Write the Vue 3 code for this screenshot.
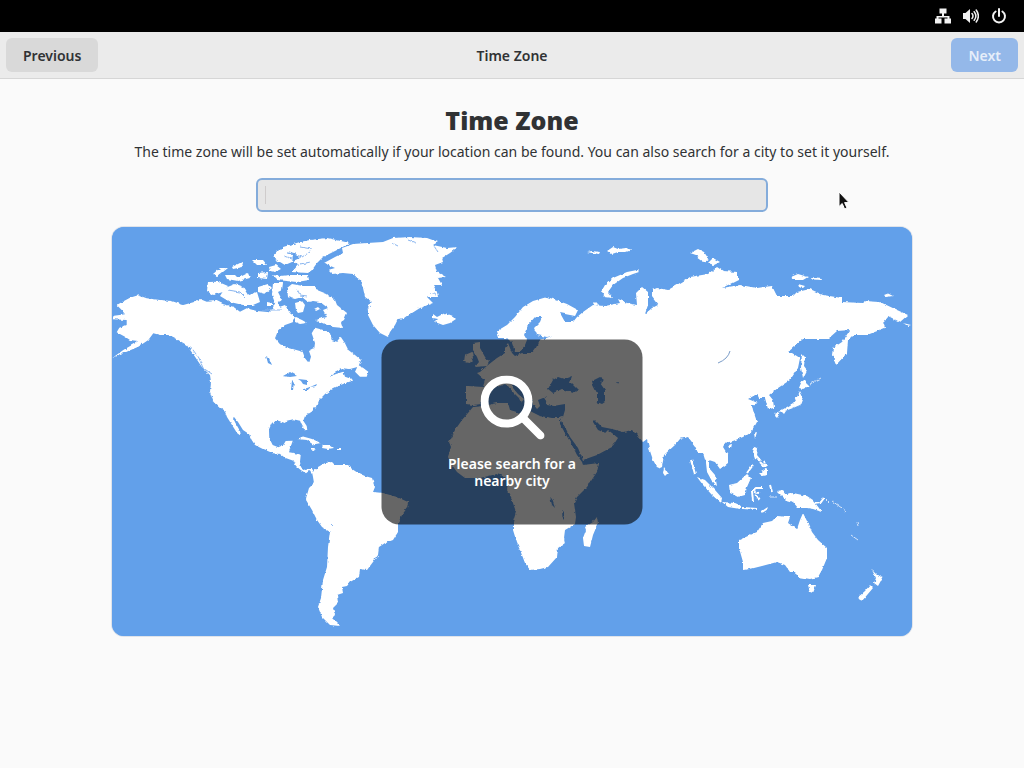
<script setup>
import { ref } from 'vue'

const city = ref('')

const land = [
  // North America
  '116.7,305 123,301.5 130,297.7 138,295.3 146.7,298.3 160,300 171.7,301 183.3,305 193.3,302.3 200,299 206.7,301.7 216.7,301 223.3,304.3 233.3,306.7 240,311.7 246.7,308.3 256.7,311 270,312.3 273.3,306.7 276.7,300 280,306.7 285,305 290,313.3 295,316.7 292.7,322.3 285,325 278.3,330 275,338.3 280,344.3 290,348.3 302.7,351.7 305,358.3 309,363.3 311,356.7 309,351 314.3,348.3 315,343 311.7,333.3 315,327.7 323.3,330 330,333.3 331.7,340 336.7,341.7 340.7,336.7 345,343.3 348.3,350 355,355 361,360 358.3,366.7 350,369 341.7,368.3 335,371.7 329.3,377 336,374 343.3,371.7 345,376.7 351.7,379 353.3,380.5 345,383.3 338,386 330,390 325,394 318.3,400.7 316,406.7 311.7,411.7 305,416 303.3,420.7 306.7,426 307.3,430 305,430.7 301.7,425 300,420.7 293.3,419.3 286.7,420.7 285,423 278.3,420.7 271.7,423.3 269,429.3 269.3,438.3 272.7,445 278.3,447.3 283.3,445 285.7,441 292.7,440.7 290.7,446.7 289,452.3 295,453.3 300.7,455 300,461.7 301,467.3 305,470 311.7,468.7 315,471.7 312.7,473.3 309,471 306,473.3 300.7,470 296,466 293.3,460.7 285,457.7 280,454 273.3,453.3 263.3,449.3 255,445 251.7,440 249,434 243,430 238,422 234,417 233,418 236,424 240,431 241,436 237,433 232,425 227,417 225,411.7 220,408.3 213.3,401.7 210,391.7 211,381.7 210,375 201.7,366.7 195,356.7 186.7,345 178.3,340 168.3,335 160,335 153.3,333.3 148.3,340 138.3,346.7 126.7,351.7 113.3,357.3 123.3,350 135,343.3 138,341 130,340 125,336.7 116.7,332.3 119.3,327.7 126.7,325 126.7,320 112.7,319.3 114,315.7 125,314.3 121.7,310',
  '355,371.7 358.3,365 363.3,368 368.3,371.7 366.7,376.7 360,376.7',
  // Arctic islands
  '208,282 218,281.7 228,286 223,292 213,295 207,291',
  '225,288 235,284 243,287 248,295 257,292 260,302 253,305 243,305 230,302 220,296',
  '225,275 235,275 238,278 248,273 250,278 238,281 227,279',
  '213,274 220,268 228,268 223,272 218,276',
  '232,267 242,262 243,267 233,269',
  '258,273 268,272 267,279 258,278',
  '252,260 263,260 267,265 257,265',
  '272,275 280,276 290,275 308,275 309,280 297,282 277,280',
  '272,257 278,250 285,249 293,255 292,262 285,265 280,262',
  '283,247 300,242 310,240 327,238 350,243 337,250 323,257 317,263 312,270 308,273 292,272 298,265 293,261 300,258 295,253 283,250',
  '258,287 268,284 272,288 265,294 258,292',
  '273,283 283,283 282,290 278,292 282,300 275,303 272,295',
  '287,288 292,284 303,286 315,286 317,290 327,294 335,300 337,305 347,313 344,320 341,322 343,328 333,327 327,325 315,320 327,317 323,310 328,308 320,302 313,301 308,302 302,297 295,299 288,297',
  '295,303 302,301 305,305 303,312 298,313 296,310',
  '295,317 302,320 307,323 300,324 295,322',
  '267,302 272,303 272,306 267,306',
  '314,309 318,307 320,309 316,311',
  '269,267 276,265 281,269 275,272 270,271',
  // Greenland and Iceland
  '324,263 335,257 343,253 342,248 353,244 367,243 383,242 393,238 410,237 427,238 438,242 433,245 447,248 458,247 450,253 442,258 443,262 435,265 437,272 446,277 438,278 442,285 433,285 437,292 438,297 427,297 433,303 420,308 412,313 405,318 398,319 395,325 390,332 388,337 380,333 373,325 368,315 368,305 372,302 365,297 363,288 360,280 353,274 343,273 332,274 328,270 335,268',
  '433,314 437,317 445,313 453,316 456,319 450,323 443,325 435,322 438,319 433,318',
  // Caribbean
  '297,439 303,436.5 312,439 321,443 313,444.5 307,440',
  '323,445 330,445 334,448 328,449 322,448',
  '311,448 315,448 314,450 311,449.5',
  '337,448 341,448 341,450 337,450',
  // South America
  '312,472 318,467 325,463 332,462 335,465 348,465 352,469 358,473 365,476 372,478 375,487 373,492 383,493 397,497 408,502 407,508 402,515 398,523 398,532 393,540 385,543 379,547 378,555 373,562 367,570 360,569 359,577 350,582 347,586 342,587 343,593 337,595 338,603 333,608 335,615 332,618 340,626 330,625 322,617 318,607 321,598 323,580 327,567 328,547 330,532 322,527 317,520 312,510 306,500 307,495 309,488 314,483 313,477',
  // Africa
  '473,407 483,406 497,403 508,403 510,410 520,413 525,417 530,411 540,416 552,418 560,418 560,424 565,433 572,445 577,455 582,462 583,465 599,463 597,472 587,487 577,497 574,503 576,517 575,524 565,530 564,538 565,543 558,548 557,557 548,567 540,569 530,570 525,563 520,550 517,543 513,530 513,522 516,512 512,500 507,490 508,482 505,477 497,474 480,478 465,478 457,472 452,465 448,457 451,447 449,442 455,430 462,420 468,413',
  '597,517 598,523 593,535 590,547 584,546 583,538 586,530 585,527 593,522',
  // Eurasia
  '466,386 466,398 466,404 473,405 480,404 485,397 490,393 493,388 500,386 505,384 508,386 513,392 519,398 521,403 524,399 518,394 513,388 513,384 516,383 520,387 527,392 531,398 533,404 537,409 540,406 538,400 543,398 548,396 545,399 547,405 553,406 565,404 565,410 563,417 560,418 562,423 565,427 570,437 578,448 583,460 597,455 612,447 618,438 612,433 608,430 605,433 598,430 593,422 595,420 602,427 612,429 623,432 632,430 637,435 643,442 647,439 649,448 653,460 658,469 662,467 664,455 675,445 680,439 688,437 695,446 698,453 703,453 706,463 707,472 713,483 717,486 715,475 709,468 709,460 715,462 720,469 728,463 728,455 723,447 725,443 733,441 743,437 752,431 757,422 753,410 752,405 758,403 748,399 757,394 759,398 765,398 768,409 774,408 773,400 769,395 778,388 790,380 798,368 800,358 792,353 787,353 803,339 828,339 837,331 850,330 842,342 833,348 832,355 836,365 847,353 848,340 853,335 867,335 885,328 883,322 888,316 900,322 908,315 897,310 880,302 865,301 862,303 842,302 842,298 823,295 810,289 797,292 793,296 777,296 772,286 757,288 740,285 722,288 738,280 738,272 723,271 717,267 708,274 690,277 680,283 668,290 657,288 652,290 652,297 658,305 652,308 645,314 648,305 648,292 642,287 636,293 637,305 627,303 618,299 620,303 605,306 593,305 583,312 577,317 573,322 565,322 560,313 575,316 578,310 567,304 553,299 547,297 533,301 523,307 515,317 507,325 497,331 499,338 507,338 512,343 515,352 520,352 525,345 527,340 524,335 528,325 535,317 542,317 540,322 534,328 537,335 547,337 552,336 540,340 538,345 532,353 522,353 515,356 512,353 508,343 505,347 505,353 497,358 488,365 480,372 477,373 485,380 483,387 468,386',
  '473,343 480,342 480,348 485,357 489,362 487,366 475,367 479,362 477,357 473,350',
  '465,355 472,352 473,358 470,363 464,362',
  // Arctic Ocean
  '639,272 633,274 623,278 613,285 608,292 613,298 605,297 601,292 605,285 613,278 627,272 637,270',
  '587,252 592,251 600,252 599,254 592,253',
  '607,251 613,247 618,249 626,248 632,250 626,252 618,252 612,254',
  '690,253 698,249 704,252 708,258 700,258 696,255',
  '696,257 704,257 709,260 703,262',
  '708,263 713,258 720,262 714,265',
  '791,277 798,274 808,277 803,280 793,280',
  '811,277 822,278 821,280 813,279.5',
  '798,284 805,286 803,288 799,287',
  '884,295 888,293.5 893,296 886,297',
  '903,323 911,325 908,326',
  '593,303 596,302 598,304 595,306',
  // East Asia
  '802,354 805,357 804,366 807,370 803,378 801,368',
  '801,383 803,380 809,386 803,389 799,388',
  '800,391 803,397 800,405 793,408 785,411 778,412 787,407 793,403 797,397',
  '776,412 780,413 777,418 775,416',
  '781,411 786,411 784,414',
  '754,433 757,432 755,439',
  '728,445 732,444 731,448 729,448',
  '664,467 668,473 665,476 663,473',
  '754,447 758,448 757,455 762,461 755,459 753,453',
  '759,473 763,471 767,468 767,475 762,476',
  // Indonesia
  '697,477 705,480 715,490 722,498 721,503 712,495 703,485',
  '722,502 735,503 742,506 740,509 728,507',
  '729,485 737,483 747,474 751,478 747,487 745,495 738,497 730,493',
  '777,491 783,490 787,495 793,493 807,496 813,500 822,512 813,509 807,508 798,508 793,502 786,500 783,497',
  // Oceania
  '739,540 757,532 763,523 772,521 777,516 790,517 788,523 797,529 800,520 803,513 808,523 812,532 818,540 827,548 827,558 822,570 818,577 810,579 798,577 795,572 790,572 785,565 777,562 762,566 750,569 743,570 743,562 739,548',
  '808,585 816,585 813,593 810,592',
  '872,570 877,575 883,577 878,586 874,583 876,578',
  '870,585 873,588 862,601 857,598 865,591'
]

const water = [
  // North American lakes
  '266,356 269,358 272,365 268,363',
  '283,376 290,372 297,376 290,377',
  '292,380 294,382 293,390 291,390',
  '298,379 307,380 307,385 303,384 301,381',
  '301,390 310,387 308,390',
  '310,387 317,384 316,386',
  // Black Sea and Caspian Sea
  '548,389 553,380 558,377 564,379 572,376 570,382 578,390 573,393 562,389 553,393',
  '592,381 600,377 604,380 600,383 605,390 605,402 602,404 597,402 597,393 593,385',
  '617,381 619,382 618,384',
  // African lakes
  '550,497 552,499 555,508 552,505',
  '562,510 564,512 564,520 562.5,518'
]
</script>

<template>
  <div class="screen">
    <div class="topbar">
      <svg class="status" viewBox="0 0 16 16" aria-label="Network">
        <path d="M4.500 0.500h7v5H9v2.500h5.500v2.500h1.500v5h-6.500v-5H12.500v-1H3.500v1H6.500v5H0v-5H1.500V8H7V5.500H4.500z" />
      </svg>
      <svg class="status" viewBox="0 0 16 16" aria-label="Volume">
        <path d="M0 5h2.500L7 1v14L2.500 11H0z" />
        <path class="line" d="M9 5.500q2 2.500 0 5M11.200 3.700q3.400 4.300 0 8.600M13.200 2q4.300 6 0 12" />
      </svg>
      <svg class="status" viewBox="0 0 16 16" aria-label="Power">
        <path class="line thick" d="M8 1v7M4.600 3.500A6 6 0 1 0 11.400 3.500" />
      </svg>
    </div>

    <header class="header">
      <button class="btn" type="button">Previous</button>
      <span class="title">Time Zone</span>
      <button class="btn next" type="button" disabled>Next</button>
    </header>

    <main class="content">
      <h1>Time Zone</h1>
      <label for="city">The time zone will be set automatically if your location can be found. You can also search for a city to set it yourself.</label>
      <div class="search">
        <input id="city" v-model="city" type="text" autocomplete="off">
      </div>

      <div class="map">
        <svg class="world" viewBox="112 227 800 409" aria-hidden="true">
          <defs>
            <filter id="coast" x="0" y="0" width="100%" height="100%">
              <feTurbulence type="fractalNoise" baseFrequency="0.25" numOctaves="2" seed="4" result="n" />
              <feDisplacementMap in="SourceGraphic" in2="n" scale="3" xChannelSelector="R" yChannelSelector="G" />
            </filter>
          </defs>
          <g filter="url(#coast)">
            <rect class="sea" x="104" y="219" width="816" height="425" />
            <polygon v-for="(p, i) in land" :key="'l' + i" class="land" :points="p" />
            <polygon v-for="(p, i) in water" :key="'w' + i" class="sea" :points="p" />
            <path class="isles" d="M753 501L752 491L756 488L762 488M754 492L759 493M755 494L759 500M770 485L772 492M743 508L757 509M762 512L768 508M813 503L821 502L824 498M747 473L753 465M760 462L765 467M764 462L766 466M691 460L695 474" />
            <path class="thin" d="M832 501L846 511M851 535L858 540M857 522L858 526M810 384L821 378M825 499L829 503M770 497L777 497" />
            <path class="fjord" d="M288 252L302 257L310 252M300 247L312 249M284 256L292 259M300 264L311 262M228 290L240 292L246 298M262 310L282 310M297 289L300 295L307 296M392 243L398 246M408 240L416 243M434 246L438 252M190 346L199 358L203 368L212 374M430 293L436 295M371 306L366 310M331 524L333 526" />
          </g>
          <path class="baikal" d="M730 351Q728 359 718 363" />
        </svg>
        <div class="notice">
          <svg class="lens" viewBox="0 0 64 64" aria-hidden="true">
            <circle cx="26" cy="26" r="22" />
            <path d="M42 42L60 60" />
          </svg>
          <p>Please search for a nearby city</p>
        </div>
      </div>
    </main>

    <svg class="pointer" viewBox="0 0 12 20" aria-hidden="true">
      <path d="M1 1v14.500l3.200-3 2.400 5.500 2.400-1-2.400-5.400H11z" />
    </svg>
  </div>
</template>

<style>
body {
  background: #fafafa;
}
</style>

<style scoped>
.screen {
  position: relative;
  min-height: 100vh;
  background: #fafafa;
  color: #303234;
  font-family: "Noto Sans", "Open Sans", sans-serif;
  font-size: 14px;
  line-height: 17px;
}

.topbar {
  display: flex;
  align-items: center;
  justify-content: flex-end;
  gap: 12px;
  height: 32px;
  padding: 0 17px;
  background: #000;
}

.status {
  width: 16px;
  height: 16px;
  fill: #f2f2f2;
}

.status .line {
  fill: none;
  stroke: #f2f2f2;
  stroke-width: 1.5;
  stroke-linecap: round;
}

.status .thick {
  stroke-width: 2;
}

.header {
  display: grid;
  grid-template-columns: 1fr auto 1fr;
  align-items: center;
  height: 46px;
  padding: 0 6px;
  border-bottom: 1px solid #d6d6d6;
  background: #ebebeb;
  font-weight: 600;
}

.btn {
  justify-self: start;
  height: 34px;
  padding: 0 17px;
  border: 0;
  border-radius: 6px;
  background: #d9d9d9;
  color: #303234;
  font: inherit;
}

.next {
  justify-self: end;
  background: #94b8e9;
  color: #e6eef9;
}

.content {
  display: flex;
  flex-direction: column;
  align-items: center;
  padding: 24px 112px;
}

h1 {
  margin: 0;
  font-size: 25px;
  line-height: 34px;
  font-weight: 900;
}

label {
  margin-top: 6px;
  white-space: nowrap;
}

.search {
  position: relative;
  width: 64%;
  margin-top: 18px;
}

.search::after {
  content: "";
  position: absolute;
  left: 9px;
  top: 8px;
  width: 1px;
  height: 18px;
  background: #cfcccc;
}

input {
  display: block;
  box-sizing: border-box;
  width: 100%;
  height: 34px;
  padding: 0 8px;
  border: 2px solid #84acdb;
  border-radius: 6px;
  background: #e6e6e6;
  color: inherit;
  font: inherit;
  outline: none;
}

.map {
  position: relative;
  width: 100%;
  margin-top: 15px;
  overflow: hidden;
  border-radius: 12px;
  background: #62a0ea;
  box-shadow: 0 0 0 1px #dfe3ea;
}

.world {
  display: block;
  width: 100%;
}

.sea {
  fill: #62a0ea;
}

.land {
  fill: #fff;
}

.isles,
.thin,
.fjord,
.baikal {
  fill: none;
  stroke: #fff;
  stroke-width: 2;
}

.thin {
  stroke-width: 1;
  stroke: #d5e5fa;
}

.fjord {
  stroke: #8ab6ef;
  stroke-width: 1;
}

.baikal {
  stroke: #7a9cc8;
  stroke-width: 1;
}

.notice {
  position: absolute;
  top: 50%;
  left: 50%;
  display: flex;
  flex-direction: column;
  align-items: center;
  box-sizing: border-box;
  width: 261px;
  padding: 36px 60px;
  transform: translate(-50%, -50%);
  border-radius: 18px;
  background: rgba(0, 0, 0, 0.6);
  color: #fff;
  font-weight: 600;
  text-align: center;
}

.lens {
  width: 64px;
  height: 64px;
  fill: none;
  stroke: #fff;
  stroke-width: 8;
  stroke-linecap: round;
}

.notice p {
  margin: 15px 0 0;
}

.pointer {
  position: absolute;
  top: 191px;
  left: 838px;
  width: 12px;
  height: 20px;
  fill: #111;
  stroke: #fff;
}
</style>
